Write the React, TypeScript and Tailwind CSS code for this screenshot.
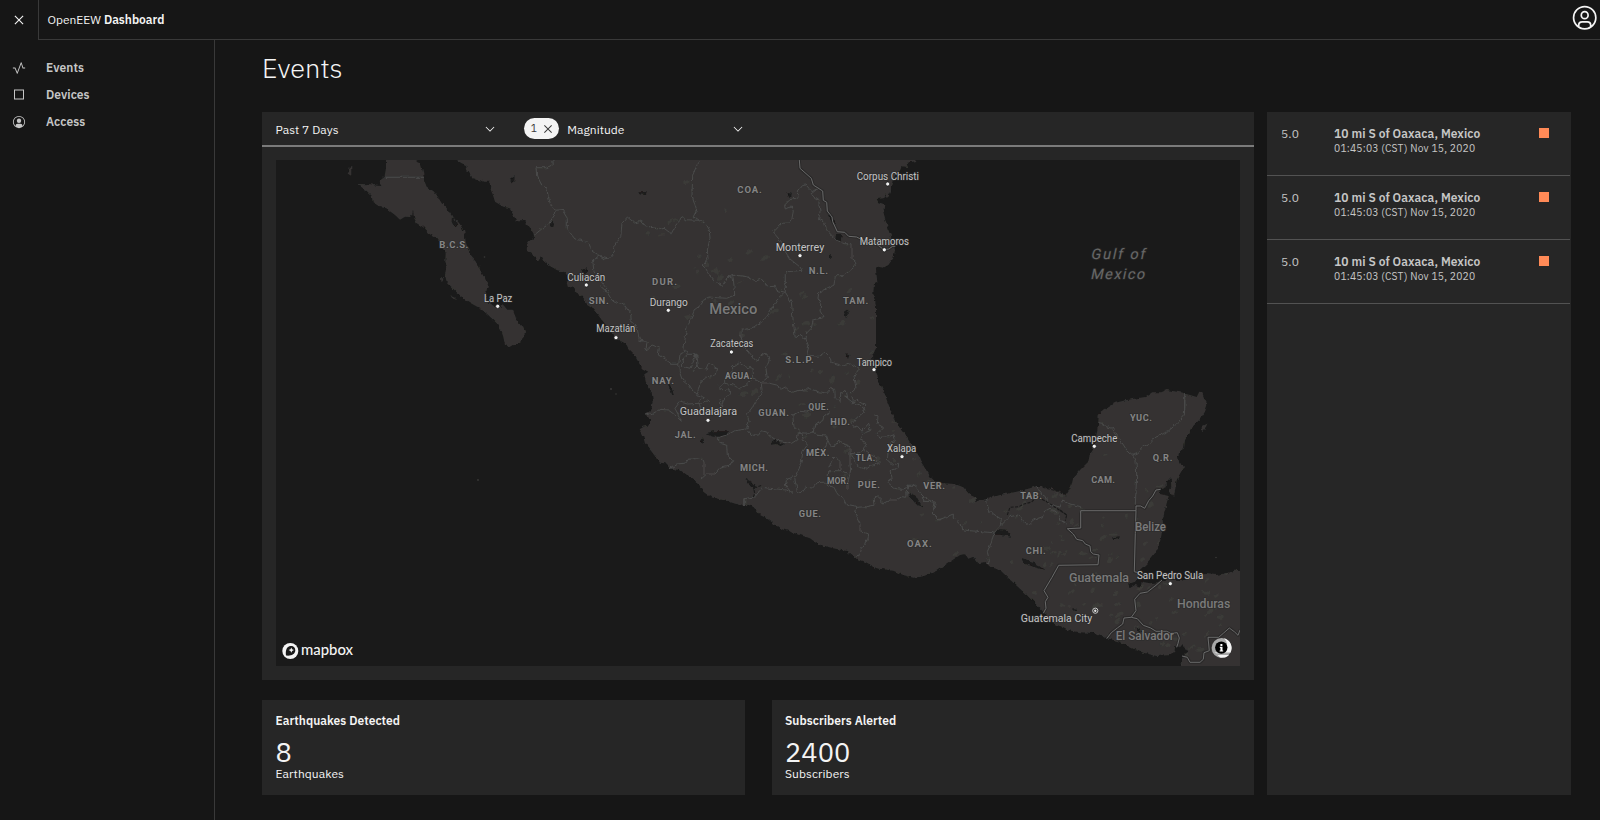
import React from "react";

/* ---------- Map geometry ---------- */

// Each survey sheet has its own origin and is drawn at three units per map pixel.
const SHEETS = {
  A: [270, 155],
  B: [600, 155],
  C: [600, 400],
  D: [900, 400],
  E: [860, 155],
} as const;

type Sheet = keyof typeof SHEETS;

const pts = (sheet: Sheet, list: string) => {
  const [ox, oy] = SHEETS[sheet];
  return list
    .trim()
    .split(/\s+/)
    .map((p) => {
      const [x, y] = p.split(",").map(Number);
      return `${(ox + x / 3).toFixed(1)} ${(oy + y / 3).toFixed(1)}`;
    })
    .join(" L");
};

const area = (...parts: [Sheet, string][]) =>
  "M" + parts.map(([s, l]) => pts(s, l)).join(" L") + "Z";
const line = (sheet: Sheet, list: string) => "M" + pts(sheet, list);

const LAND = [
  area([
    "A",
    "348,0 348,40 344,62 332,72 326,80 334,92 345,104 356,102 356,94 345,92 343,84 338,94 322,92 300,88 262,87 275,97 290,108 305,122 308,142 325,152 345,156 355,165 375,180 390,194 405,185 420,186 427,178 429,166 433,190 440,205 460,217 475,235 500,250 515,275 527,295 526,320 530,330 525,360 530,380 545,397 560,412 580,430 600,443 630,460 655,480 680,505 693,525 700,545 705,570 720,577 735,568 750,558 762,545 765,530 760,515 745,503 738,490 728,464 712,464 700,450 690,456 670,452 655,440 648,425 650,405 655,385 645,370 635,355 628,335 615,318 600,300 593,280 587,260 583,230 570,208 555,190 545,182 530,160 515,145 500,120 490,108 470,95 462,75 460,55 452,25 437,18 430,0",
  ]),
  area(
    [
      "A",
      "560,0 562,16 575,25 588,30 592,46 606,66 615,68 640,80 660,80 664,92 662,104 668,118 675,140 700,155 718,158 728,176 738,196 760,196 775,210 790,235 793,247 778,258 770,270 771,288 785,296 800,312 806,318 812,304 820,318 835,330 860,345 885,352 900,375 890,380 893,395 910,398 918,412 935,422 945,435 950,446 965,455 980,475 1000,500",
    ],
    [
      "B",
      "25,520 60,560 80,570 85,580 100,595 115,620 126,640 145,650 133,658 137,680 155,710 158,735",
    ],
    [
      "C",
      "158,0 155,25 135,45 150,60 150,75 128,80 116,88 128,105 135,130 155,155 180,188 196,190 210,206 240,210 275,235 295,250 310,275 330,290 380,303 435,320 440,314 460,320 480,345 500,355 540,385 585,400 630,415 655,433 700,445 740,453 765,473 795,485 830,505 880,512 910,525 940,533",
    ],
    [
      "D",
      "40,533 75,528 110,512 150,485 180,465 196,462 205,476 220,470 235,490 255,486 270,500 300,510 340,548 380,585 430,635 442,652 460,668 500,690 540,697 590,700 620,715 660,725 700,745 730,758 770,768 810,765 824,750 826,738 840,742 848,732 850,746 868,752 855,762 850,775 842,790 850,820 1040,820 1040,510 1010,510 985,518 950,525 915,522 880,532 840,540 800,538 780,545 750,550 725,545 722,560 705,555 690,564 685,552 705,545 715,535 714,515 740,490 765,460 780,430 785,400 790,380 788,360 795,330 800,310 806,288 780,282 778,270 800,262 800,245 812,232 814,262 806,270 822,290 830,240 838,225 852,200 838,190 834,170 838,155 852,145 855,120 865,105 876,82 900,58 915,35 922,15",
    ],
    [
      "E",
      "1043,750 1035,735 1026,712 1018,710 1010,726 990,720 960,712 920,705 904,712 880,712 860,725 800,735 760,745 728,765",
    ],
    [
      "D",
      "605,35 596,45 595,65 592,90 583,140 570,160 565,185 545,205 520,232 515,255 505,275 495,290 482,270 470,278 455,262 440,268 428,258 410,258 390,265 350,275 300,285 260,297 230,303 222,290 210,285 190,262 165,252 110,248 95,235 75,205 60,180 55,165 40,140 0,85",
    ],
    ["C", "880,50 860,0"],
    [
      "B",
      "856,720 845,700 835,670 822,640 816,605 828,580 828,450 820,420 822,385 832,380 828,345 822,340 835,335 850,338 865,330 880,310 885,285 880,260 868,230 858,200 850,170 853,148 835,142 830,132 850,130 855,118 862,128 872,110 878,90 885,60 900,50 906,34 925,36 920,24 945,18 950,0",
    ]
  ),
  area(["A", "240,32 244,36 244,62 233,56 238,48"]),
  area(["D", "905,78 922,70 918,80 906,94"]),
  area(["A", "540,420 560,430 556,434"]),
  area(["A", "513,365 520,372 515,388"]),
];

const LAKES = [
  area(["A", "722,72 734,64 732,78 722,86"]),
  area(["A", "842,196 852,206 850,216 840,214"]),
  area(["A", "546,182 556,196 562,210 552,214 545,200"]),
  area(["A", "936,346 950,340 952,352 944,358"]),
  area(["B", "112,112 140,112 138,120 116,118"]),
  area(["B", "560,114 575,116 574,126 562,124"]),
  area(["B", "684,180 694,180 706,208 696,202"]),
  area(["B", "708,240 728,240 722,258 706,252"]),
  area(["B", "684,296 692,300 692,314 684,308"]),
  area(["B", "732,470 744,462 746,478 738,490"]),
  area(["B", "736,594 748,600 744,612"]),
  area(["B", "198,672 206,680 222,718 216,718"]),
  area(["C", "318,100 340,94 384,94 380,108 340,110 326,106"]),
  area(["C", "308,112 312,122 306,132 302,126"]),
  area(["C", "510,128 526,118 540,128 552,132 542,138 528,132 512,134"]),
  area(["C", "436,236 456,246 466,258 460,270 450,256"]),
  area(["C", "928,278 948,288 968,322 952,316 930,292"]),
  area(["D", "288,390 320,392 336,410 300,404 284,404"]),
  area(["D", "364,474 400,486 434,510 400,500 372,490"]),
  area(["D", "634,412 660,409 658,414 636,417"]),
  area(["D", "516,624 530,626 526,634"]),
  area(["D", "708,682 724,690 718,698"]),
];

const STREAMS = [
  line("D", "322,345 330,322 356,320 372,312 395,306 410,290 440,305 470,325 500,345"),
  line("D", "428,262 450,268 470,272 492,280"),
  line("D", "480,330 500,345 496,362"),
  line("C", "450,256 470,262 484,256"),
  line("C", "462,270 464,280 460,292"),
];

const STATES = [
  line("A", "848,14 850,28 830,38 798,38 800,60 815,90 830,100 835,125 842,150 852,165"),
  line("A", "793,240 815,222 835,208 852,182 855,166 876,164 892,190 892,220 905,240 915,252 955,262 965,285 988,302 1020,310"),
  line("A", "988,302 968,318 972,350 990,375 1005,395 1020,412"),
  line("B", "298,14 278,60 276,120 290,165 280,185 295,196"),
  line("B", "0,302 12,312 30,308 45,290 42,275 62,245 66,205 82,186 104,204 124,198 136,212 160,218 178,224 192,220 214,236 226,212 240,196 242,186 258,194 295,196 318,206 328,224 330,250 322,285 324,312 310,330 322,352 345,382 368,394 384,366 400,370 404,420"),
  line("B", "0,392 20,410 36,436 70,446 92,476 94,500 112,522 118,555 142,562 136,588 156,570 178,578 175,600 196,612 215,628 236,628 240,598 256,592"),
  line("B", "404,420 380,430 355,428 330,426 310,436 300,452 282,465 278,480 262,512 256,545 252,580 262,598 288,598"),
  line("B", "384,366 404,360 440,365 468,378 484,372 505,395 526,394 530,406 556,412"),
  line("B", "656,98 636,110 618,90 604,92 592,108 594,128 570,134 554,150 556,162 574,156 580,168 576,190 566,204 545,205 520,232 545,262 556,290 570,312 600,336 606,346 566,350 556,356 556,412 530,436 516,460 500,486 462,516 424,526 422,545 430,572 452,598 466,616 478,612 486,596 504,600 508,616 498,640 502,668 484,684"),
  line("B", "656,98 632,118 656,136 660,170 656,192 674,202 680,225 694,240 712,258 730,266 756,266 756,310 770,322 752,345 730,362 706,362 702,390 656,414 654,430 662,448 660,468 672,488 640,494 634,520 620,534 618,552 600,538 586,550 580,500 574,440 556,412"),
  line("B", "618,552 626,575 620,600 655,604 676,592 690,606 694,622 730,632 752,626 770,636"),
  line("B", "770,636 778,640 762,664 768,700 752,715 760,735 756,748"),
  line("B", "484,684 505,684 530,690 545,702 556,696 574,712 600,706 616,708 625,700 655,710 680,714 692,700 704,704 706,728 720,742 722,715 735,706 740,728 758,742 780,750 796,765"),
  line("B", "372,684 380,664 396,650 398,636 420,622 440,636 456,640 458,668 440,690 420,702 400,690 372,684 356,694 372,708 385,700 390,715 370,738 360,765"),
  line("B", "262,598 246,615 248,634 270,640 284,606 288,598 290,630 280,650"),
  line("B", "290,600 296,640 318,645 326,625 350,640 344,660 322,666 304,678 296,700 290,722 310,728 296,740 302,765"),
  line("B", "236,628 238,650 246,672 268,690 280,710 292,716"),
  line("B", "456,668 484,684 486,704 480,726 470,735"),
  line("C", "135,45 160,40 180,28 205,30 225,45 244,64 238,50 225,25 240,5 262,12 300,10 330,0"),
  line("C", "360,0 365,20 345,30 320,40"),
  line("C", "470,0 458,20 440,45 448,62 440,86 404,92 384,104 356,112 356,128 380,136 382,165 398,182 388,198 362,204 345,222 320,222 300,240"),
  line("C", "210,206 230,192 254,190 262,178 286,176 305,172 312,186 312,225"),
  line("C", "440,86 456,106 476,105 484,92 500,96 508,108 530,120 560,126 575,130 590,120 595,100 606,100 610,120 622,135 608,155 606,175 598,205 584,230 560,238 556,255 575,280 560,270 520,266 485,262"),
  line("C", "600,98 582,80 578,45 600,34 620,36 640,30"),
  line("C", "485,265 465,290 434,296 434,318"),
  line("C", "584,236 588,255 592,276 606,278 618,262 638,264 652,248 676,246 682,256"),
  line("C", "595,98 630,100 640,96 650,106 680,108 684,120 672,150"),
  line("C", "684,120 690,138 706,136 716,120 722,128 750,140 750,195 752,210 744,245 744,270"),
  line("C", "722,212 686,212 682,256 702,262 710,278 716,286"),
  line("C", "686,205 696,180 708,168 720,185 720,210 745,222"),
  line("C", "640,98 644,72 668,62 672,48 690,38"),
  line("C", "750,160 770,162 790,150 808,162 826,172 838,190 815,195 798,208 775,200 764,178 750,160"),
  line("C", "756,10 770,0 794,16 790,38 768,55 756,72 760,82 772,78 786,94 806,70 810,92 786,102 780,120 800,128 790,150"),
  line("C", "820,45 834,48 832,72 850,82 832,100 840,112 866,110 882,104 886,122 866,135 862,180 878,195 896,190 894,205 870,212 876,232 864,248 884,265 906,268 926,258 920,280"),
  line("C", "716,286 730,296 740,316 770,322 800,320 822,316 820,298 832,288 845,300 846,312 870,300 890,300 905,290 920,292 924,256 945,256 966,286 986,300 1004,308 1000,340 1020,360"),
  line("C", "770,322 766,345 780,372 780,395 806,405 798,430 784,448 780,464 760,472"),
  line("D", "66,286 72,304 106,306 100,340 116,360 160,342 160,355 186,378 188,390 230,394 280,398"),
  line("D", "260,297 264,330 285,345 304,358 300,380 282,398 275,425 262,455 268,480 265,495"),
  line("D", "304,375 330,350 355,345 370,365 384,376 400,360 428,350 432,335 450,325 478,345 484,362 500,372"),
  line("D", "410,258 422,280 436,290 442,310 480,322 488,300 510,312 542,320 542,332"),
  line("D", "596,68 610,70 618,80 636,84 650,105 666,128 680,150 698,165 708,180 710,225 706,315"),
  line("D", "698,165 715,158 722,145 748,130 768,108 802,96 832,70 853,45 855,0"),
  line("E", "974,714 974,765"),
  line("A", "345,67 462,67"),
];

const FRONTIERS = [
  line("B", "598,14 600,40 634,70 640,90 668,108 670,136 680,142 682,168 696,186 698,200 712,230 734,232 746,244 770,246 800,262 830,268 852,284 866,282 878,274 886,274"),
  line("D", "708,332 542,332 542,384 502,386 520,402 530,418 548,422 556,432 570,438 572,455 580,462 597,465 594,494 476,496 456,532 432,572 444,592 436,605 438,625 430,640"),
  line("D", "782,268 768,270 758,288 746,302 734,325 722,318 708,318 708,332 706,400 703,515 715,518"),
  line("D", "786,540 768,556 742,576 720,580 704,598 708,632 694,652 672,654 668,672 652,684 634,698 620,716"),
  line("D", "694,652 712,656 730,676 752,684 768,694 800,694 812,700 832,698 838,714 834,730 830,742"),
  line("D", "846,768 862,772 870,787 900,787 910,778 912,758 928,752 924,712 956,712 970,700 988,684 1004,696 1014,706 1020,690"),
];

// Scattered highland patches, denser toward the south.
const HILLS = Array.from({ length: 230 }, (_, i) => {
  const h = (n: number) => {
    const v = Math.sin(i * 12.9898 + n * 78.233) * 43758.5453;
    return v - Math.floor(v);
  };
  const t = Math.sqrt(h(6));
  return {
    x: 570 + t * 640 + (h(1) - 0.5) * 120,
    y: 200 + t * 420 + (h(2) - 0.5) * 170,
    rx: 1 + h(3) * 3.4,
    ry: 0.8 + h(4) * 1.6,
    r: -60 + h(5) * 60,
  };
});

type Label = [string, number, number, number, number];

// name, left, right, baseline, font size, then the marker's position
const CITIES: [string, number, number, number, number, number, number][] = [
  ["Culiacán", 567.3, 605.3, 280.6, 11, 586.3, 285],
  ["La Paz", 484, 512.3, 302.3, 11, 497.7, 306.3],
  ["Mazatlán", 596.3, 635.3, 332.3, 11, 616, 337.7],
  ["Durango", 649.7, 687.7, 306.3, 11, 668.3, 310.3],
  ["Zacatecas", 710.3, 753.3, 347.3, 11, 731.4, 352],
  ["Monterrey", 775.7, 824.3, 251.3, 11.5, 800, 255.7],
  ["Corpus Christi", 856.7, 919, 179.8, 11, 887.7, 184],
  ["Matamoros", 859.7, 909, 245, 11, 884.3, 249.8],
  ["Tampico", 856.7, 892, 365.7, 11, 874, 369.7],
  ["Guadalajara", 679.7, 737, 415, 11.5, 708, 420.3],
  ["Xalapa", 887, 916.3, 452, 11, 902, 456.7],
  ["Campeche", 1071.3, 1117.3, 442, 11, 1094.3, 446.3],
  ["San Pedro Sula", 1137, 1203.3, 579.2, 11, 1170.3, 583.7],
  ["Guatemala City", 1020.7, 1092.3, 621.6, 11, 1095.3, 610.7],
];

const REGIONS: Label[] = [
  ["B.C.S.", 439.3, 468.3, 247.7, 9.5],
  ["SIN.", 588.7, 608.7, 304, 9.5],
  ["COA.", 737.3, 761.7, 193, 9.5],
  ["DUR.", 652, 677, 284.7, 9.5],
  ["N.L.", 808.7, 828, 273.7, 9.5],
  ["TAM.", 843, 868.3, 304, 9.5],
  ["S.L.P.", 785.3, 813.7, 363.3, 9.5],
  ["AGUA.", 725, 752.3, 378.5, 8.6],
  ["NAY.", 651.7, 674, 383.9, 9.5],
  ["GUAN.", 758.3, 789, 416, 9.2],
  ["QUE.", 808.3, 828.7, 410, 8.6],
  ["HID.", 830.3, 850, 425.3, 9.2],
  ["JAL.", 674.7, 695.7, 437.6, 9.2],
  ["MÉX.", 806, 829.3, 455.7, 9.2],
  ["TLA.", 855.7, 875.3, 461.4, 8.6],
  ["MICH.", 740, 768, 471, 9.2],
  ["MOR.", 827, 848.7, 483.9, 8.6],
  ["PUE.", 857.7, 880, 488, 9.2],
  ["GUE.", 798.7, 821, 517, 9.2],
  ["OAX.", 907, 931.7, 546.7, 9.5],
  ["VER.", 923.3, 945, 489, 9.2],
  ["TAB.", 1020.3, 1042, 499.3, 9.2],
  ["CHI.", 1025.7, 1045.7, 553.7, 9.2],
  ["CAM.", 1091.3, 1115, 482.7, 9.2],
  ["YUC.", 1130, 1152, 421.2, 9.2],
  ["Q.R.", 1152.7, 1172.3, 461, 9.2],
];

const COUNTRIES: Label[] = [
  ["Mexico", 709.3, 757.3, 314.4, 15.5],
  ["Guatemala", 1069, 1129, 581.6, 13],
  ["Belize", 1135, 1166, 531.2, 12.6],
  ["Honduras", 1177, 1230.3, 608, 13],
  ["El Salvador", 1115.7, 1174, 640, 12.6],
];

const SEA: Label[] = [
  ["Gulf of", 1090.6, 1144.6, 259, 14.5],
  ["Mexico", 1090.3, 1144.3, 279, 14.5],
];

function MapLabel({
  label,
  className,
  squeeze = false,
}: {
  label: readonly (string | number)[];
  className: string;
  squeeze?: boolean;
}) {
  const [name, x0, x1, y, size] = label as Label;
  return (
    <text
      x={x0}
      y={y}
      fontSize={size}
      textLength={x1 - x0}
      lengthAdjust={squeeze ? "spacingAndGlyphs" : "spacing"}
      className={className}
      stroke="#2a2a2a"
      strokeWidth="1.6"
      strokeOpacity="0.7"
      paintOrder="stroke"
      strokeLinejoin="round"
    >
      {name}
    </text>
  );
}

function EventsMap() {
  return (
    <svg
      viewBox="276 160 964 506"
      className="block h-[506px] w-[964px] bg-[#1a1a1a] font-[Roboto,sans-serif]"
    >
      <defs>
        <filter id="coast" filterUnits="userSpaceOnUse" x="270" y="150" width="980" height="526">
          <feTurbulence type="fractalNoise" baseFrequency="0.22" numOctaves="2" seed="4" />
          <feDisplacementMap in="SourceGraphic" scale="4" xChannelSelector="R" yChannelSelector="G" />
        </filter>
        <clipPath id="land">
          {LAND.map((d, i) => (
            <path key={i} d={d} />
          ))}
        </clipPath>
      </defs>
      <g filter="url(#coast)">
        {LAND.map((d, i) => (
          <path key={i} d={d} fill="#343332" />
        ))}
        <g clipPath="url(#land)" fill="#3e3d3b" fillOpacity="0.7">
          {HILLS.map((h, i) => (
            <ellipse key={i} cx={h.x} cy={h.y} rx={h.rx} ry={h.ry} transform={`rotate(${h.r} ${h.x} ${h.y})`} />
          ))}
        </g>
        {LAKES.map((d, i) => (
          <path key={i} d={d} fill="#1a1a1a" />
        ))}
        <g fill="none" stroke="#4a4a4a" strokeWidth="1" strokeLinejoin="round">
          {STATES.map((d, i) => (
            <path key={i} d={d} />
          ))}
        </g>
      </g>
      <g fill="none" stroke="#1a1a1a" strokeWidth="1.1" strokeDasharray="3 1.4">
        {STREAMS.map((d, i) => (
          <path key={i} d={d} />
        ))}
      </g>
      <g fill="#3a3938">
        <circle cx="611" cy="389" r="1" />
        <circle cx="616" cy="394" r="0.8" />
        <circle cx="478" cy="480" r="0.9" />
        <circle cx="1216" cy="557.5" r="0.8" />
        <circle cx="484.5" cy="257" r="0.8" />
      </g>
      <g fill="none" strokeLinejoin="round">
        {FRONTIERS.map((d, i) => (
          <path key={i} d={d} stroke="#232323" strokeWidth="3" strokeOpacity="0.6" />
        ))}
        {FRONTIERS.map((d, i) => (
          <path key={i} d={d} stroke="#6a6a6a" strokeWidth="1" />
        ))}
      </g>
      {REGIONS.map((l) => (
        <MapLabel key={l[0]} label={l} className="fill-[#858585] font-bold" />
      ))}
      {COUNTRIES.map((l) => (
        <MapLabel key={l[0]} label={l} squeeze className="fill-[#7a7a7a] font-medium" />
      ))}
      {SEA.map(([name, x0, x1, y, size]) => (
        <g key={name} transform={`translate(${x0} ${y}) skewX(-12)`}>
          <MapLabel label={[name, 0, x1 - x0, 0, size]} className="fill-[#686868]" />
        </g>
      ))}
      {CITIES.map((c) => (
        <MapLabel key={c[0]} label={c} squeeze className="fill-[#c4c4c4]" />
      ))}
      {CITIES.map((c) =>
        c[0] === "Guatemala City" ? (
          <g key={c[0]}>
            <circle cx={c[5]} cy={c[6]} r="2.6" fill="#2a2a2a" stroke="#c9c9c9" strokeWidth="1" />
            <circle cx={c[5]} cy={c[6]} r="1.2" fill="#e5e5e5" />
          </g>
        ) : (
          <circle key={c[0]} cx={c[5]} cy={c[6]} r="2.1" fill="#f2f2f2" stroke="#1c1c1c" strokeWidth="0.8" />
        )
      )}
      <g>
        <circle cx="290.3" cy="651" r="8" fill="#f4f4f4" />
        <path
          d="M286 655.6 C285.3 650.4 286.6 646.4 290.6 646 C293.6 645.8 295.5 648 295.3 650.6 C295 654.6 291 656.2 286 655.6Z"
          fill="#1a1a1a"
        />
        <path d="M291.3 647.4l.8 1.9 1.9.8-1.9.8-.8 1.9-.8-1.9-1.9-.8 1.9-.8z" fill="#f4f4f4" />
        <text
          x="301"
          y="655.3"
          fontSize="14.4"
          textLength="52"
          lengthAdjust="spacingAndGlyphs"
          className="fill-[#f4f4f4] font-[Lato,sans-serif] font-medium"
        >
          mapbox
        </text>
      </g>
      <g>
        <circle cx="1221.6" cy="648" r="10" fill="#a8a8a8" />
        <path d="M1224 638.3A10 10 0 0 1 1230.6 652.4H1214.4A8.6 8.6 0 0 0 1224 638.3Z" fill="#f4f4f4" />
        <path d="M1217.5 655H1229a10 10 0 0 1-4 2.5h-5z" fill="#f4f4f4" />
        <circle cx="1221.3" cy="647.6" r="6.2" fill="#000" />
        <rect x="1220.4" y="644" width="2" height="2" fill="#fff" />
        <path d="M1219.8 646.8h2.7v3.6h.7v1.2h-3.6v-1.2h.8v-2.4h-.6z" fill="#fff" />
      </g>
    </svg>
  );
}

/* ---------- Icons ---------- */

const CloseIcon = ({ className }: { className: string }) => (
  <svg viewBox="0 0 32 32" className={className} fill="currentColor">
    <path d="M24 9.4L22.6 8 16 14.6 9.4 8 8 9.4 14.6 16 8 22.6 9.4 24 16 17.4 22.6 24 24 22.6 17.4 16z" />
  </svg>
);

const ChevronIcon = () => (
  <svg viewBox="0 0 16 16" className="size-3.5 text-[#f4f4f4]" fill="currentColor">
    <path d="M8 11L3 6 3.7 5.3 8 9.6 12.3 5.3 13 6z" />
  </svg>
);

const ActivityIcon = () => (
  <svg viewBox="0 0 32 32" className="size-3.5" fill="currentColor">
    <path d="M12,29a1,1,0,0,1-.92-.62L6.33,17H2V15H7a1,1,0,0,1,.92.62L12,25.28,20.06,3.65A1,1,0,0,1,21,3a1,1,0,0,1,.93.68L25.72,15H30v2H25a1,1,0,0,1-.95-.68L21,7,12.94,28.35A1,1,0,0,1,12,29Z" />
  </svg>
);

const DeviceIcon = () => (
  <svg viewBox="0 0 14 14" className="size-3.5" fill="none" stroke="currentColor">
    <rect x="2.5" y="2" width="9" height="9" />
  </svg>
);

const AccessIcon = () => (
  <svg viewBox="0 0 32 32" className="size-3.5" fill="currentColor">
    <path d="M16,8a5,5,0,1,0,5,5A5,5,0,0,0,16,8Z" />
    <path d="M16,2A14,14,0,1,0,30,16,14.0158,14.0158,0,0,0,16,2Zm7.9925,22.9258A5.0016,5.0016,0,0,0,19,20H13a5.0016,5.0016,0,0,0-4.9925,4.9258,12,12,0,1,1,15.985,0Z" />
  </svg>
);

const AvatarIcon = () => (
  <svg viewBox="0 0 32 32" className="size-[27.4px]" fill="currentColor">
    <path d="M16,8a5,5,0,1,0,5,5A5,5,0,0,0,16,8Zm0,8a3,3,0,1,1,3-3A3.0034,3.0034,0,0,1,16,16Z" />
    <path d="M16,2A14,14,0,1,0,30,16,14.0158,14.0158,0,0,0,16,2ZM10,26.3765V25a3.0033,3.0033,0,0,1,3-3h6a3.0033,3.0033,0,0,1,3,3v1.3765a11.8989,11.8989,0,0,1-12,0Zm13.9925-1.4507A5.0016,5.0016,0,0,0,19,20H13a5.0016,5.0016,0,0,0-4.9925,4.9258,12,12,0,1,1,15.985,0Z" />
  </svg>
);

/* ---------- Page ---------- */

const NAV = [
  { label: "Events", icon: <ActivityIcon /> },
  { label: "Devices", icon: <DeviceIcon /> },
  { label: "Access", icon: <AccessIcon /> },
];

const QUAKES = [1, 2, 3].map((id) => ({
  id,
  magnitude: "5.0",
  place: "10 mi S of Oaxaca, Mexico",
  time: "01:45:03 (CST) Nov 15, 2020",
}));

function Stat({ title, value, unit }: { title: string; value: string; unit: string }) {
  return (
    <section className="h-[95px] flex-1 bg-[#262626] pt-[13px] pl-[13.5px] text-[#f4f4f4]">
      <h2 className="text-[12px] leading-4 font-semibold tracking-[0.04px]">{title}</h2>
      <p className="mt-[9px] text-[27.2px] leading-7">{value}</p>
      <p className="text-[12px] leading-4 tracking-[0.08px]">{unit}</p>
    </section>
  );
}

export default function App() {
  return (
    <div className="flex h-[820px] w-[1600px] flex-col overflow-hidden bg-[#161616] font-['IBM_Plex_Sans',Roboto,sans-serif] text-[#f4f4f4]">
      <header className="flex h-10 shrink-0">
        <button className="flex w-[38px] items-center justify-center" aria-label="Close menu">
          <CloseIcon className="size-[18px]" />
        </button>
        <div className="flex flex-1 items-center justify-between border-b border-l border-[#393939] pl-[8.5px]">
          <p className="text-[12px]">
            OpenEEW <span className="font-semibold">Dashboard</span>
          </p>
          <div className="mr-[2px] -mt-[3px]">
            <AvatarIcon />
          </div>
        </div>
      </header>

      <div className="flex flex-1">
        <nav className="flex w-[215px] flex-col border-r border-[#393939] pt-[14px] text-[#c6c6c6]">
          {NAV.map((n) => (
            <a key={n.label} className="flex h-[27px] items-center pl-3">
              {n.icon}
              <span className="ml-5 text-[12px] font-semibold tracking-[0.06px]">{n.label}</span>
            </a>
          ))}
        </nav>

        <main className="flex-1 pl-[47px]">
          <h1 className="h-[72px] pt-3 text-[27.2px] leading-8 font-light">Events</h1>
          <div className="flex gap-[13px]">
            <div className="w-[992px]">
              <section className="h-[568px] bg-[#262626]">
                <div className="flex h-[35px] items-center border-b-2 border-[#7b7b7b] pl-[13.5px] text-[12px]">
                  <span className="w-[207.2px] pt-[2px] tracking-[0.04px]">Past 7 Days</span>
                  <ChevronIcon />
                  <span className="ml-[27px] flex h-[21px] w-[35px] items-center gap-[3px] rounded-full bg-[#f4f4f4] pl-[7px] text-[10.3px] tracking-[0.2px] text-[#393939]">
                    1
                    <CloseIcon className="size-4" />
                  </span>
                  <span className="ml-[8.5px] w-[163.5px] pt-[2px] tracking-[0.04px]">Magnitude</span>
                  <ChevronIcon />
                </div>
                <div className="px-[14px] pt-[13px]">
                  <EventsMap />
                </div>
              </section>
              <div className="mt-5 flex gap-[27px]">
                <Stat title="Earthquakes Detected" value="8" unit="Earthquakes" />
                <Stat title="Subscribers Alerted" value="2400" unit="Subscribers" />
              </div>
            </div>

            <aside className="h-[683px] w-[304px] bg-[#262626]">
              {QUAKES.map((q) => (
                <article
                  key={q.id}
                  className="flex h-16 w-[303px] border-b border-[#525252] pt-[14px] pl-[14px] text-[#c6c6c6]"
                >
                  <span className="w-[53px] text-[12px] leading-4 tracking-[0.14px]">{q.magnitude}</span>
                  <div className="w-[205px]">
                    <h3 className="text-[12px] leading-4 font-semibold tracking-[0.06px]">{q.place}</h3>
                    <p className="text-[10.3px] leading-3 tracking-[0.2px]">{q.time}</p>
                  </div>
                  <i className="mt-[2px] size-[10px] bg-[#ff8a57]" />
                </article>
              ))}
            </aside>
          </div>
        </main>
      </div>
    </div>
  );
}
